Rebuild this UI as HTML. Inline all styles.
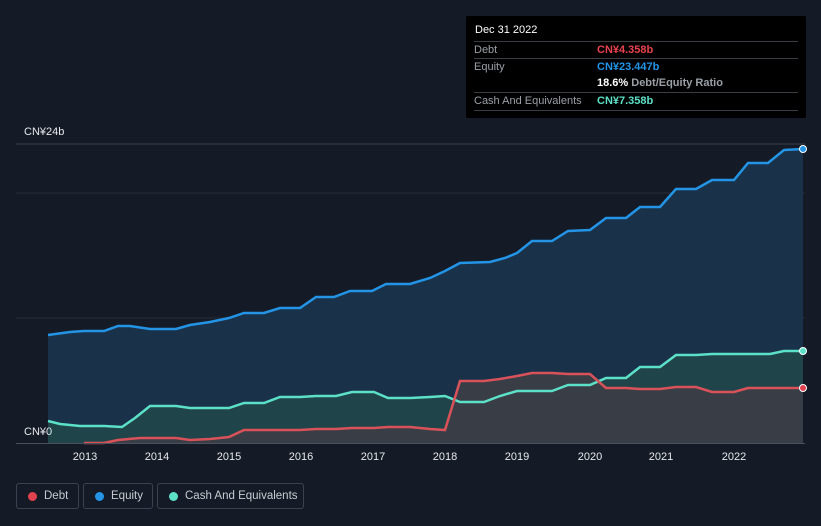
<!DOCTYPE html>
<html><head><style>
body{margin:0;background:#151b26;font-family:"Liberation Sans",sans-serif;width:821px;height:526px;overflow:hidden;position:relative}
.tt{position:absolute;left:466px;top:16px;width:340px;height:102px;background:#000;border-radius:2px}
.tt .h{position:absolute;left:9px;top:8px;color:#fff;font-size:11px}
.row{position:absolute;left:8px;width:324px;border-top:1px solid #3a3d42;height:17px;font-size:11px;color:#9aa0a6}
.row span{position:absolute;left:123px;top:2px;font-weight:bold}
.row .l{position:absolute;left:0;top:2px}
.leg{position:absolute;top:483px;height:26px;border:1px solid #3a4250;border-radius:3px;color:#c7cbd1;font-size:11.5px;box-sizing:border-box}
.leg i{position:absolute;left:11px;top:8px;width:9px;height:9px;border-radius:50%}
.leg b{font-weight:normal;position:absolute;left:27px;top:6px}
</style></head><body>
<svg width="821" height="526" style="position:absolute;left:0;top:0">
<line x1="16" y1="144" x2="805" y2="144" stroke="#3a414c"/>
<line x1="16" y1="193" x2="805" y2="193" stroke="#262d38"/>
<line x1="16" y1="318" x2="805" y2="318" stroke="#262d38"/>
<polygon fill="#19324a" points="48,443 48,335 70,332 84,331 104,331 118,326 130,326 150,329 176,329 190,325 210,322 229,318 244,313 264,313 280,308 300,308 316,297 334,297 350,291 372,291 386,284 410,284 430,278 445,271 460,263 490,262 505,258 517,253 532,241 552,241 568,231 590,230 606,218 626,218 640,207 660,207 676,189 696,189 712,180 734,180 748,163 768,163 784,150 803,149 803,443"/>
<polygon fill="#1f4449" points="48,443 48,421 60,424 80,426 104,426 122,427 135,418 150,406 176,406 190,408 229,408 244,403 264,403 280,397 300,397 316,396 336,396 352,392 374,392 388,398 410,398 430,397 445,396 460,402 484,402 500,396 517,391 552,391 568,385 590,385 606,378 626,378 640,367 660,367 676,355 696,355 712,354 734,354 770,354 784,351 803,351 803,443"/>
<polygon fill="#393d45" points="84,443 104,443 118,440 140,438 176,438 190,440 210,439 229,437 244,430 300,430 316,429 336,429 352,428 374,428 388,427 410,427 430,429 445,430 460,381 484,381 500,379 517,376 532,373 552,373 568,374 590,374 606,388 626,388 640,389 660,389 676,387 696,387 712,392 734,392 748,388 768,388 803,388 803,443"/>
<polyline fill="none" stroke="#2394e6" stroke-width="2.5" points="48,335 70,332 84,331 104,331 118,326 130,326 150,329 176,329 190,325 210,322 229,318 244,313 264,313 280,308 300,308 316,297 334,297 350,291 372,291 386,284 410,284 430,278 445,271 460,263 490,262 505,258 517,253 532,241 552,241 568,231 590,230 606,218 626,218 640,207 660,207 676,189 696,189 712,180 734,180 748,163 768,163 784,150 803,149"/>
<polyline fill="none" stroke="#5de0c8" stroke-width="2.5" points="48,421 60,424 80,426 104,426 122,427 135,418 150,406 176,406 190,408 229,408 244,403 264,403 280,397 300,397 316,396 336,396 352,392 374,392 388,398 410,398 430,397 445,396 460,402 484,402 500,396 517,391 552,391 568,385 590,385 606,378 626,378 640,367 660,367 676,355 696,355 712,354 734,354 770,354 784,351 803,351"/>
<polyline fill="none" stroke="#d9525a" stroke-width="2.5" points="84,443 104,443 118,440 140,438 176,438 190,440 210,439 229,437 244,430 300,430 316,429 336,429 352,428 374,428 388,427 410,427 430,429 445,430 460,381 484,381 500,379 517,376 532,373 552,373 568,374 590,374 606,388 626,388 640,389 660,389 676,387 696,387 712,392 734,392 748,388 768,388 803,388"/>
<circle cx="803" cy="149" r="3.5" fill="#2394e6" stroke="#fff" stroke-width="1"/>
<circle cx="803" cy="351" r="3.5" fill="#5de0c8" stroke="#fff" stroke-width="1"/>
<circle cx="803" cy="388" r="3.5" fill="#e0434e" stroke="#fff" stroke-width="1"/>
<line x1="16" y1="443.5" x2="805" y2="443.5" stroke="#4a515c"/>
<g fill="#e6e8eb" font-size="11" text-anchor="middle" font-family="Liberation Sans">
<text x="85" y="460">2013</text><text x="157" y="460">2014</text><text x="229" y="460">2015</text><text x="301" y="460">2016</text><text x="373" y="460">2017</text><text x="445" y="460">2018</text><text x="517" y="460">2019</text><text x="590" y="460">2020</text><text x="661" y="460">2021</text><text x="734" y="460">2022</text>
</g>
<text x="24" y="135" fill="#e6e8eb" font-size="11">CN¥24b</text>
<text x="24" y="435" fill="#e6e8eb" font-size="11">CN¥0</text>
</svg>
<div class="tt">
<div class="h">Dec 31 2022</div>
<div class="row" style="top:25px"><div class="l">Debt</div><span style="color:#e8434e">CN¥4.358b</span></div>
<div class="row" style="top:42px"><div class="l">Equity</div><span style="color:#2394e6">CN¥23.447b</span></div>
<div class="row" style="top:59px;border-top:none"><span style="color:#fff">18.6% <b style="color:#9aa0a6">Debt/Equity Ratio</b></span></div>
<div class="row" style="top:76px"><div class="l">Cash And Equivalents</div><span style="color:#5de0c8">CN¥7.358b</span></div>
<div class="row" style="top:94px;height:0"></div>
</div>
<div class="leg" style="left:16px;width:63px"><i style="background:#e0434e"></i><b>Debt</b></div>
<div class="leg" style="left:83px;width:70px"><i style="background:#2394e6"></i><b>Equity</b></div>
<div class="leg" style="left:157px;width:147px"><i style="background:#5de0c8"></i><b>Cash And Equivalents</b></div>
</body></html>
